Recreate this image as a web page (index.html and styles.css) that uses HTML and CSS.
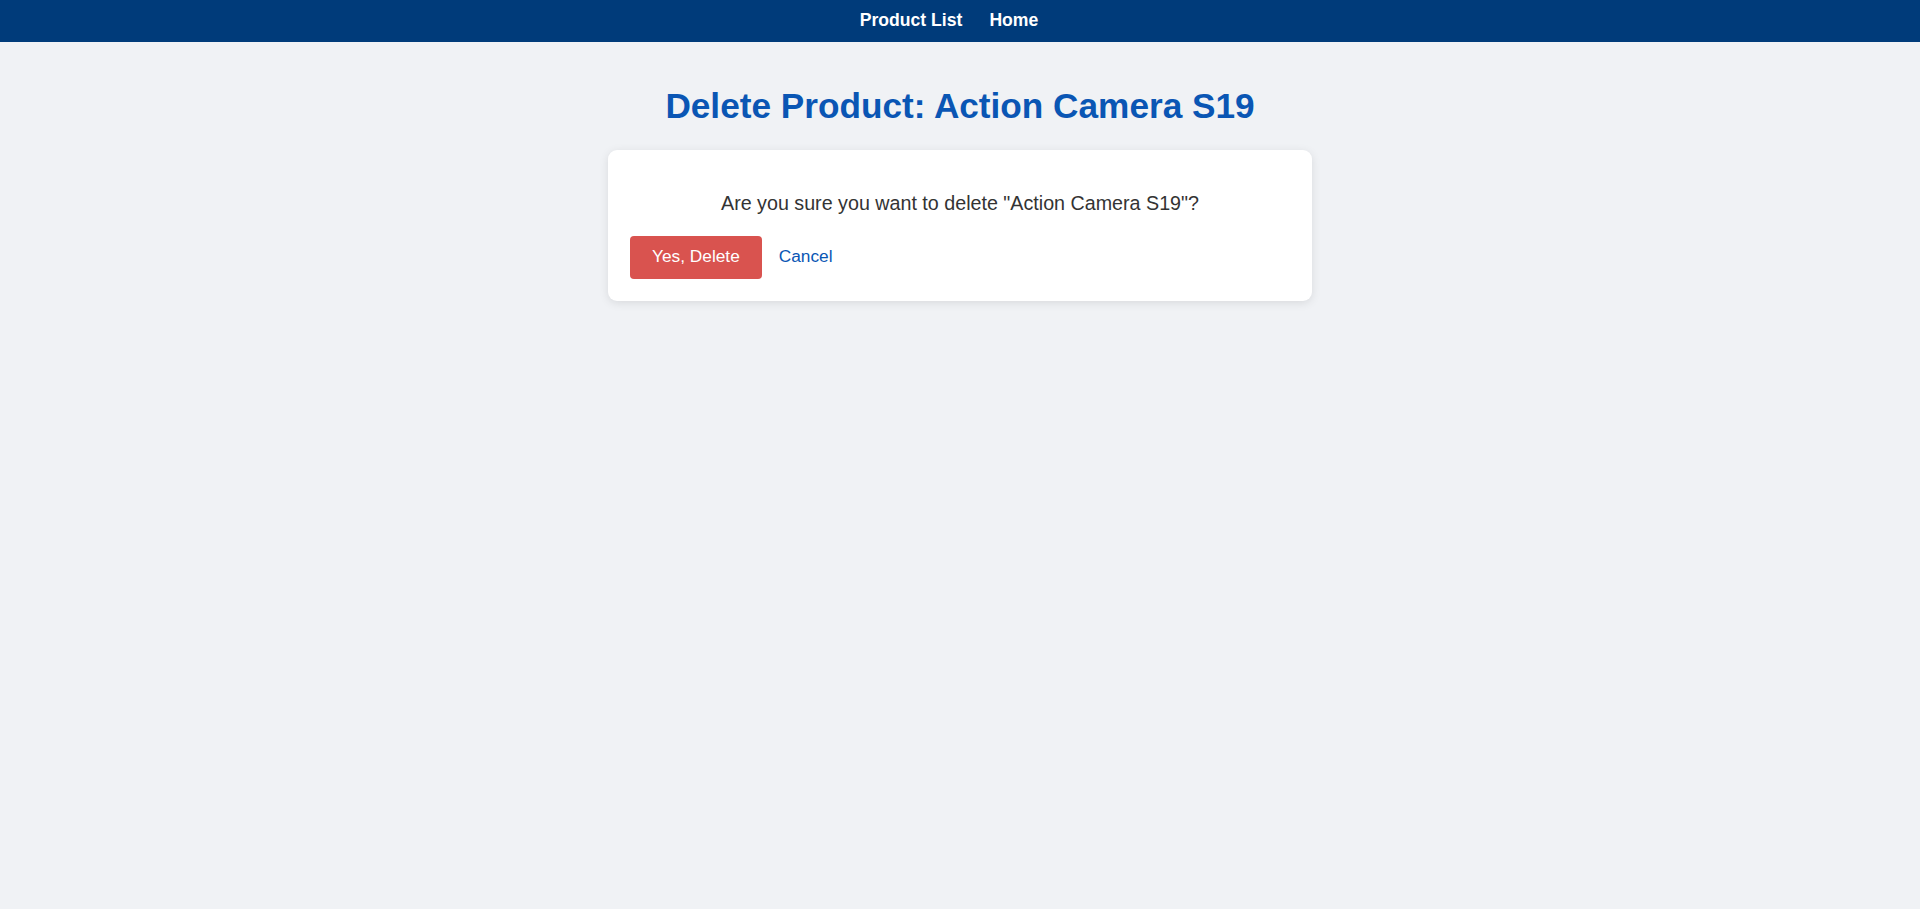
FILE: index.html
```html
<!DOCTYPE html>
<html lang="en">
<head>
<meta charset="utf-8">
<title>Delete Product</title>
<link rel="stylesheet" href="styles.css">
</head>
<body>
<nav class="topnav">
  <a class="nav-link" href="#">Product List</a>
  <a class="nav-link" href="#">Home</a>
</nav>
<main class="page">
  <h1 class="page-title">Delete Product: Action Camera S19</h1>
  <section class="card">
    <p class="confirm-text">Are you sure you want to delete "Action Camera S19"?</p>
    <div class="actions">
      <button class="btn-danger" type="button">Yes, Delete</button>
      <a class="cancel-link" href="#">Cancel</a>
    </div>
  </section>
</main>
</body>
</html>
```

FILE: styles.css
```css
* { box-sizing: border-box; }

html, body {
  margin: 0;
  padding: 0;
}

body {
  background: #f0f2f5;
  font-family: "Liberation Sans", Arial, sans-serif;
  color: #333333;
}

.topnav {
  height: 42px;
  background: #003b7a;
  display: flex;
  justify-content: center;
  align-items: center;
  gap: 5px;
}

.nav-link {
  color: #ffffff;
  font-weight: bold;
  font-size: 17.6px;
  text-decoration: none;
  margin-right: 22px;
  line-height: normal;
  margin-top: -1px;
}

.page {
  padding: 20px 20px;
  display: flex;
  flex-direction: column;
  align-items: center;
}

.page-title {
  margin: 23.6px 0 24.8px;
  font-size: 35.2px;
  font-weight: bold;
  color: #0a56b4;
  text-align: center;
  line-height: normal;
}

.card {
  width: 704px;
  background: #ffffff;
  border-radius: 9px;
  padding: 22px;
  box-shadow: 0 2px 10px rgba(0, 0, 0, 0.1);
}

.confirm-text {
  margin: 19.8px 0 21px;
  font-size: 19.7px;
  text-align: center;
  color: #333333;
  line-height: normal;
}

.actions {
  display: flex;
  align-items: center;
  gap: 17px;
}

.btn-danger {
  background: #d9534f;
  color: #ffffff;
  border: none;
  border-radius: 4px;
  padding: 10px 22px 12px;
  font-family: "Liberation Sans", Arial, sans-serif;
  font-size: 17.3px;
  line-height: normal;
  height: 43px;
  cursor: pointer;
}

.cancel-link {
  color: #0a56b4;
  font-size: 17.3px;
  text-decoration: none;
  margin-top: -2px;
}
```
